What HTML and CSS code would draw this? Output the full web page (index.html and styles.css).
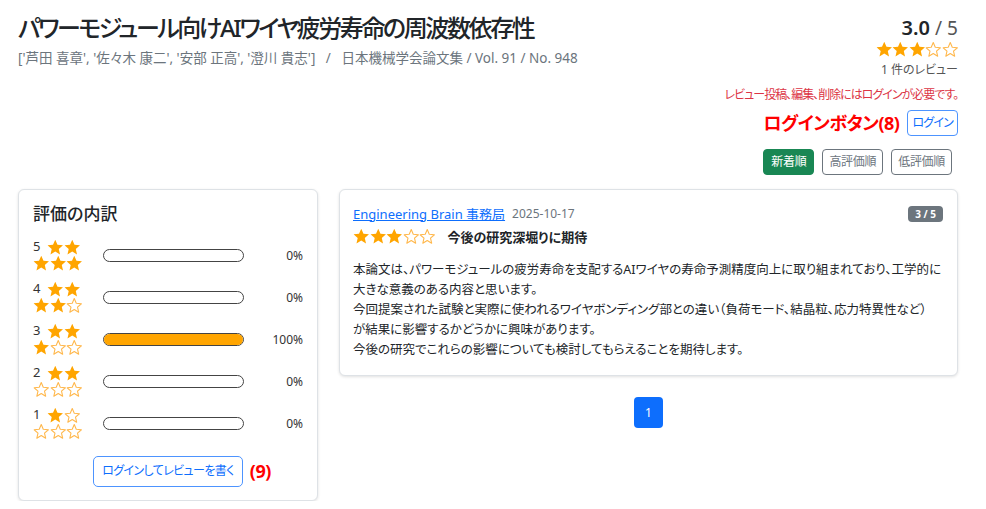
FILE: index.html
```html
<!DOCTYPE html>
<html lang="ja">
<head>
<meta charset="utf-8">
<title>レビュー</title>
<link rel="stylesheet" href="styles.css">
</head>
<body>
<svg class="defs" width="0" height="0" aria-hidden="true">
  <defs>
    <symbol id="star-on" viewBox="1 1.2 22 21.4"><path d="M12 1.5l3.1 7.1 7.6.7-5.8 5.1 1.7 7.5L12 17.9l-6.6 4 1.7-7.5L1.3 9.3l7.6-.7z" fill="#ffa500"/></symbol>
    <symbol id="star-off" viewBox="1 1.2 22 21.4"><path d="M12 2.6l2.8 6.6 7.1.6-5.4 4.7 1.6 7L12 17.8l-6.1 3.7 1.6-7-5.4-4.7 7.1-.6z" fill="none" stroke="#ffb84d" stroke-width="1.5" stroke-linejoin="round"/></symbol>
  </defs>
</svg>
<div class="page">
  <header class="head">
    <div class="head-left">
      <h1 class="title">パワーモジュール向けAIワイヤ疲労寿命の周波数依存性</h1>
      <div class="meta">['芦田 喜章', '佐々木 康二', '安部 正高', '澄川 貴志'] &nbsp; / &nbsp; 日本機械学会論文集 / Vol. 91 / No. 948</div>
    </div>
    <div class="head-right">
      <div class="score"><span class="score-num">3.0</span> <span class="score-den">/ 5</span></div>
      <div class="stars stars-head"><svg class="star"><use href="#star-on"/></svg><svg class="star"><use href="#star-on"/></svg><svg class="star"><use href="#star-on"/></svg><svg class="star"><use href="#star-off"/></svg><svg class="star"><use href="#star-off"/></svg></div>
      <div class="count">1 件のレビュー</div>
      <div class="login-note">レビュー投稿、編集、削除にはログインが必要です。</div>
      <div class="login-row">
        <span class="annot">ログインボタン(8)</span>
        <button class="btn btn-outline-primary btn-login">ログイン</button>
      </div>
      <div class="sort-row">
        <button class="btn btn-success">新着順</button>
        <button class="btn btn-outline-secondary">高評価順</button>
        <button class="btn btn-outline-secondary">低評価順</button>
      </div>
    </div>
  </header>

  <div class="main">
    <aside class="card breakdown">
      <h2 class="breakdown-title">評価の内訳</h2>
      <div class="dist">
        <div class="dist-row">
          <div class="dist-label"><span class="num">5</span><svg class="star"><use href="#star-on"/></svg><svg class="star"><use href="#star-on"/></svg><svg class="star"><use href="#star-on"/></svg><svg class="star"><use href="#star-on"/></svg><svg class="star"><use href="#star-on"/></svg></div>
          <div class="bar"><div class="bar-fill" style="width:0%"></div></div>
          <div class="pct">0%</div>
        </div>
        <div class="dist-row">
          <div class="dist-label"><span class="num">4</span><svg class="star"><use href="#star-on"/></svg><svg class="star"><use href="#star-on"/></svg><svg class="star"><use href="#star-on"/></svg><svg class="star"><use href="#star-on"/></svg><svg class="star"><use href="#star-off"/></svg></div>
          <div class="bar"><div class="bar-fill" style="width:0%"></div></div>
          <div class="pct">0%</div>
        </div>
        <div class="dist-row">
          <div class="dist-label"><span class="num">3</span><svg class="star"><use href="#star-on"/></svg><svg class="star"><use href="#star-on"/></svg><svg class="star"><use href="#star-on"/></svg><svg class="star"><use href="#star-off"/></svg><svg class="star"><use href="#star-off"/></svg></div>
          <div class="bar"><div class="bar-fill" style="width:100%"></div></div>
          <div class="pct">100%</div>
        </div>
        <div class="dist-row">
          <div class="dist-label"><span class="num">2</span><svg class="star"><use href="#star-on"/></svg><svg class="star"><use href="#star-on"/></svg><svg class="star"><use href="#star-off"/></svg><svg class="star"><use href="#star-off"/></svg><svg class="star"><use href="#star-off"/></svg></div>
          <div class="bar"><div class="bar-fill" style="width:0%"></div></div>
          <div class="pct">0%</div>
        </div>
        <div class="dist-row">
          <div class="dist-label"><span class="num">1</span><svg class="star"><use href="#star-on"/></svg><svg class="star"><use href="#star-off"/></svg><svg class="star"><use href="#star-off"/></svg><svg class="star"><use href="#star-off"/></svg><svg class="star"><use href="#star-off"/></svg></div>
          <div class="bar"><div class="bar-fill" style="width:0%"></div></div>
          <div class="pct">0%</div>
        </div>
      </div>
      <div class="write-row">
        <span class="write-wrap">
          <button class="btn btn-outline-primary btn-write">ログインしてレビューを書く</button>
          <span class="annot annot-9">(9)</span>
        </span>
      </div>
    </aside>

    <section class="reviews">
      <article class="card review">
        <div class="review-top">
          <div class="review-by">
            <a class="author" href="#">Engineering Brain 事務局</a>
            <span class="date">2025-10-17</span>
          </div>
          <span class="badge">3 / 5</span>
        </div>
        <div class="review-head">
          <span class="stars"><svg class="star"><use href="#star-on"/></svg><svg class="star"><use href="#star-on"/></svg><svg class="star"><use href="#star-on"/></svg><svg class="star"><use href="#star-off"/></svg><svg class="star"><use href="#star-off"/></svg></span>
          <span class="review-title">今後の研究深堀りに期待</span>
        </div>
        <p class="review-body">本論文は、パワーモジュールの疲労寿命を支配するAIワイヤの寿命予測精度向上に取り組まれており、工学的に<br>大きな意義のある内容と思います。<br>今回提案された試験と実際に使われるワイヤボンディング部との違い（負荷モード、結晶粒、応力特異性など）<br>が結果に影響するかどうかに興味があります。<br>今後の研究でこれらの影響についても検討してもらえることを期待します。</p>
      </article>
      <nav class="pager"><span class="page-btn">1</span></nav>
    </section>
  </div>
</div>
</body>
</html>
```

FILE: styles.css
```css
* { box-sizing: border-box; }
html, body { margin: 0; padding: 0; background: #fff; }
body {
  font-family: "Noto Sans", "Noto Sans CJK JP", sans-serif;
  color: #212529;
  font-size: 13px;
  font-feature-settings: "palt";
}
.defs { position: absolute; width: 0; height: 0; overflow: hidden; }
.page {
  width: 940px;
  margin-left: 18px;
}

/* header */
.head {
  display: flex;
  justify-content: space-between;
  align-items: flex-start;
}
.head-left { padding-top: 11px; }
.title {
  margin: 0;
  font-size: 24px;
  font-weight: 500;
  line-height: 34px;
  letter-spacing: -2.4px;
  color: #212529;
}
.meta {
  margin-top: 3px;
  font-size: 13.5px;
  color: #6c757d;
  line-height: 20px;
}
.head-right {
  display: flex;
  flex-direction: column;
  align-items: flex-end;
  padding-top: 16px;
}
.score { line-height: 24px; font-size: 20px; }
.score-num { font-weight: 600; color: #212529; }
.score-den { color: #555; font-size: 19px; }
.stars { display: inline-flex; align-items: center; }
.star {
  display: block;
  width: 16.5px;
  height: 16.5px;
  padding: 0 0.3px;
  flex: none;
}
.stars-head { margin-top: 1px; }
.count {
  font-size: 12px;
  color: #555;
  margin-top: 4px;
  line-height: 16px;
}
.login-note {
  margin-top: 9px;
  font-size: 12px;
  line-height: 16px;
  letter-spacing: -1px;
  color: #dc3545;
}
.login-row {
  margin-top: 7px;
  display: flex;
  align-items: center;
  gap: 8px;
}
.annot {
  color: #ff0000;
  font-weight: 700;
  font-size: 18px;
  line-height: 24px;
  letter-spacing: -0.5px;
}
.sort-row {
  margin-top: 13px;
  margin-right: 6px;
  display: flex;
  gap: 8px;
}

/* buttons */
.btn {
  font-family: inherit;
  font-feature-settings: "palt";
  font-size: 12px;
  height: 26px;
  padding: 0 6px;
  border-radius: 4px;
  border: 1px solid transparent;
  background: #fff;
  line-height: 24px;
  cursor: pointer;
  letter-spacing: -0.3px;
}
.btn-outline-primary { border-color: #4d94ff; color: #0d6efd; }
.btn-outline-secondary { border-color: #6c757d; color: #6c757d; }
.btn-success { background: #198754; border-color: #198754; color: #fff; padding: 0 7px; }
.btn-login { padding: 0 4px; letter-spacing: -0.8px; }

/* main */
.main {
  margin-top: 14px;
  display: flex;
  gap: 21px;
  align-items: flex-start;
}
.card {
  background: #fff;
  border: 1px solid #dee2e6;
  border-radius: 6px;
  box-shadow: 0 1px 3px rgba(0, 0, 0, 0.12);
}
.breakdown {
  width: 300px;
  padding: 12px 14px 13px 14px;
}
.breakdown-title {
  margin: 0;
  font-size: 17px;
  font-weight: 500;
  line-height: 24px;
}
.dist {
  margin-top: 13px;
  display: flex;
  flex-direction: column;
  gap: 9px;
}
.dist-row {
  display: grid;
  grid-template-columns: 56px 141px 1fr;
  column-gap: 14px;
  align-items: center;
}
.dist-label {
  display: flex;
  flex-wrap: wrap;
  align-items: flex-start;
}
.dist-label .num {
  width: 14px;
  font-size: 13px;
  line-height: 15px;
  color: #333;
}
.bar {
  height: 13px;
  border: 1.5px solid #444;
  border-radius: 7px;
  overflow: hidden;
  background: #fff;
}
.bar-fill { height: 100%; background: #ffa500; }
.pct { text-align: right; font-size: 12px; color: #333; }
.write-row {
  margin-top: 16px;
  text-align: center;
}
.write-wrap { position: relative; display: inline-block; }
.btn-write { height: 31px; padding: 0 8px; border-radius: 5px; letter-spacing: -0.6px; }
.annot-9 {
  position: absolute;
  left: 100%;
  margin-left: 7px;
  top: 3px;
}

/* review */
.reviews { flex: 1; }
.review { padding: 14px 13px 14px 13px; }
.review-top {
  display: flex;
  justify-content: space-between;
  align-items: center;
}
.review-by { display: flex; align-items: center; gap: 7px; }
.author {
  color: #0d6efd;
  font-size: 13px;
  text-decoration: underline;
  line-height: 20px;
}
.date { font-size: 12px; color: #6c757d; }
.badge {
  background: #6c757d;
  color: #fff;
  font-size: 10px;
  font-weight: 700;
  padding: 1px 7px;
  border-radius: 4px;
  line-height: 14px;
  margin-right: 1px;
}
.review-head {
  margin-top: 3px;
  display: flex;
  align-items: center;
  gap: 12px;
}
.review-title { font-weight: 700; font-size: 13px; }
.review-body {
  margin: 14px 0 0 0;
  font-size: 12.5px;
  line-height: 20.2px;
}
.pager {
  margin-top: 21px;
  display: flex;
  justify-content: center;
}
.page-btn {
  display: inline-block;
  width: 29px;
  height: 31px;
  line-height: 31px;
  text-align: center;
  background: #0d6efd;
  color: #fff;
  font-size: 12px;
  border-radius: 4px;
}
```
